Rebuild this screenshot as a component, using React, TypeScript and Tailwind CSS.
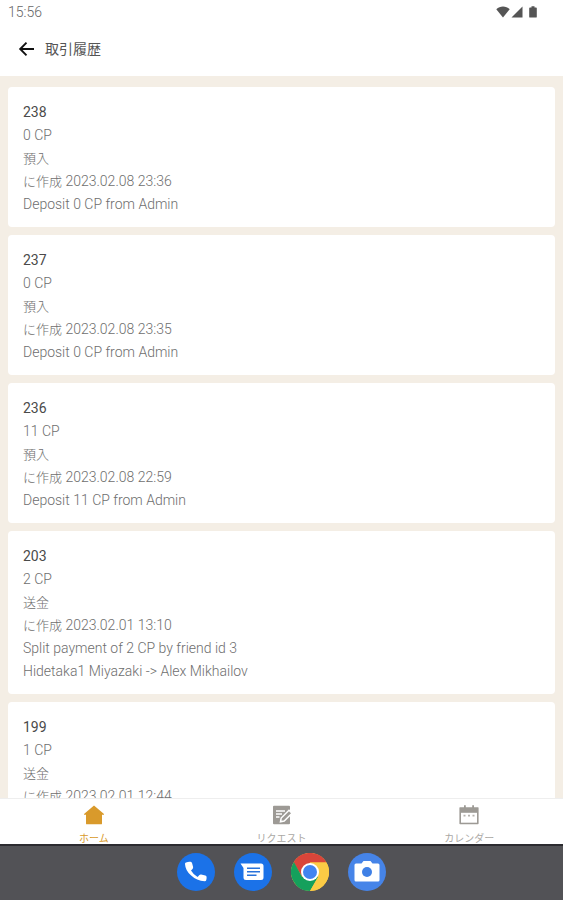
import type { ReactNode } from 'react';

type Transaction = {
  id: number;
  amount: string;
  kind: string;
  createdAt: string;
  notes: string[];
};

const transactions: Transaction[] = [
  { id: 238, amount: '0 CP', kind: '預入', createdAt: '2023.02.08 23:36', notes: ['Deposit 0 CP from Admin'] },
  { id: 237, amount: '0 CP', kind: '預入', createdAt: '2023.02.08 23:35', notes: ['Deposit 0 CP from Admin'] },
  { id: 236, amount: '11 CP', kind: '預入', createdAt: '2023.02.08 22:59', notes: ['Deposit 11 CP from Admin'] },
  {
    id: 203,
    amount: '2 CP',
    kind: '送金',
    createdAt: '2023.02.01 13:10',
    notes: ['Split payment of 2 CP by friend id 3', 'Hidetaka1 Miyazaki -> Alex Mikhailov'],
  },
  { id: 199, amount: '1 CP', kind: '送金', createdAt: '2023.02.01 12:44', notes: [] },
];

function StatusBar() {
  return (
    <div className="h-6 shrink-0 flex items-center justify-between pl-2 pr-6 text-sm font-light text-[#666666]">
      <span>15:56</span>
      <div className="flex items-center text-[#555555]">
        <svg viewBox="0 0 14 12" className="w-[14px] h-3 fill-current">
          <path d="M7 11.5 0.3 3.2C2.2 1.5 4.5.6 7 .6s4.800.9 6.700 2.600z" />
        </svg>
        <svg viewBox="0 0 12 12" className="w-3 h-3 ml-px fill-current">
          <path d="M11.500.5v11H.5z" />
        </svg>
        <svg viewBox="0 0 8 12" className="w-2 h-3 ml-[6px] mr-[2px] fill-current">
          <path d="M2.500.2h3v1.200H7q.8 0 .8.8v8.500q0 .9-.8.9H1q-.8 0-.8-.9V2.200q0-.8.8-.8h1.500z" />
        </svg>
      </div>
    </div>
  );
}

function Header() {
  return (
    <header className="h-[52px] shrink-0 flex items-center gap-[10px] pl-[18px] pb-[3px]">
      <button type="button" aria-label="Back">
        <svg viewBox="0 0 17 16" className="w-[17px] h-4" fill="none" stroke="#111111" strokeWidth="1.9">
          <path d="M16 8H2.500M8.500 1.700 2.200 8l6.300 6.300" />
        </svg>
      </button>
      <h1 className="text-sm text-[#555555]">取引履歴</h1>
    </header>
  );
}

function TransactionCard({ item }: { item: Transaction }) {
  return (
    <li className="rounded bg-white px-[15px] pt-[14px] pb-[11px] text-sm leading-[23px] font-light text-[#6e6e6e]">
      <h2 className="font-normal text-[#4a4a4a]">{item.id}</h2>
      <p>{item.amount}</p>
      <p className="text-[13px] leading-[23px]">{item.kind}</p>
      <p>
        <span className="text-[13px]">に作成</span> {item.createdAt}
      </p>
      {item.notes.map(note => (
        <p key={note}>{note}</p>
      ))}
    </li>
  );
}

function HomeIcon() {
  return (
    <svg viewBox="0 0 20 20" className="w-5 h-5 fill-current">
      <path d="M10 .5 20 8.900q.4.9-.6.900H18v8.600q0 .9-.9.900H2.900q-.9 0-.9-.9V9.800H.6q-1 0-.6-.9z" />
    </svg>
  );
}

function RequestIcon() {
  return (
    <svg viewBox="0 0 20 20" className="w-5 h-5">
      <path d="M3 .8h15q1 0 1 1v16.500q0 1-1 1H3q-1 0-1-1V1.800q0-1 1-1z" fill="#9d9a95" />
      <path d="M5 6h9M5 9h6M5 12h3.500" stroke="#ffffff" strokeWidth="1.500" />
      <path d="m9.500 16.700.7-3.700 7.800-7.800 3 3-7.800 7.800z" fill="#9d9a95" stroke="#ffffff" strokeWidth="1.500" />
    </svg>
  );
}

function CalendarIcon() {
  return (
    <svg viewBox="0 0 20 20" className="w-5 h-5">
      <path d="M1 2.200h18q.6 0 .6.600v15.800q0 .7-.7.700H1.100q-.7 0-.7-.7V2.800q0-.6.6-.6z" fill="#9d9a95" />
      <path d="M5 .3h1.800v3H5zM13.200.3H15v3h-1.800z" fill="#9d9a95" />
      <path d="M2 7.800h16v9.900H2z" fill="#ffffff" />
      <path d="M4.500 9.800h2v1.600h-2zM9 9.800h2v1.600H9zM13.500 9.800h2v1.600h-2z" fill="#b5b2ae" />
    </svg>
  );
}

function Tab({ label, active, children }: { label: string; active?: boolean; children: ReactNode }) {
  return (
    <a
      href="#"
      aria-current={active ? 'page' : undefined}
      className={
        active
          ? 'flex flex-col items-center pt-[6px] gap-2 text-[10px] leading-3 text-[#d99a2b]'
          : 'flex flex-col items-center pt-[6px] gap-2 text-[10px] leading-3 text-[#aaa8a4]'
      }
    >
      {children}
      {label}
    </a>
  );
}

function Dock() {
  return (
    <div className="h-14 shrink-0 flex items-center justify-center gap-[19px] pb-[2px] bg-[#525256] border-t-2 border-[#2c2b30]">
      <button type="button" aria-label="Phone">
        <svg viewBox="0 0 38 38" className="w-[38px] h-[38px]">
          <circle cx="19" cy="19" r="19" fill="#1b72e8" />
          <path
            d="M9 9.500q2.800-1.200 4.600-.7 1.200.3 1.500 1.500l1 3.800q.2 1-.6 1.800l-1.500 1.600q2.400 4.200 6.600 6.400l1.800-1.800q.7-.7 1.700-.5l4.200.9q1.200.3 1.300 1.500.1 1.800-.4 3.300-.3 1-1.400 1-8.200-.5-13.900-6.100Q8.400 17.700 8 11q-.1-1.100 1-1.500z"
            fill="#ffffff"
          />
        </svg>
      </button>
      <button type="button" aria-label="Messages">
        <svg viewBox="0 0 38 38" className="w-[38px] h-[38px]">
          <circle cx="19" cy="19" r="19" fill="#1b72e8" />
          <path d="M6.500 10.500h20.500q2.500 0 2.500 2.500v11.500q0 2.500-2.500 2.500H12q-2.500 0-2.500-2.500V15z" fill="#ffffff" />
          <path d="M13 15.200h13M13 18.700h13M13 22.200h9.500" stroke="#2872da" strokeWidth="1.600" />
        </svg>
      </button>
      <button type="button" aria-label="Chrome">
        <svg viewBox="0 0 38 38" className="w-[38px] h-[38px]">
          <circle cx="19" cy="19" r="19" fill="#fccb45" />
          <path d="M2.500 9.500A19 19 0 0 1 35.500 9.500H19L11 23.500z" fill="#d9453a" />
          <path d="M2.900 9A19 19 0 0 0 19 38L27.200 23.700 11 23.700z" fill="#15a05c" />
          <path d="M19 9.500h16.500A19 19 0 0 1 19 38l8.200-14.300z" fill="#fccb45" />
          <circle cx="19" cy="19" r="9" fill="#ffffff" />
          <circle cx="19" cy="19" r="7" fill="#4284f0" />
        </svg>
      </button>
      <button type="button" aria-label="Camera">
        <svg viewBox="0 0 38 38" className="w-[38px] h-[38px]">
          <circle cx="19" cy="19" r="19" fill="#4684e8" />
          <path
            d="M8 10.500h5.500L15.500 8h7l2 2.500H30q1.500 0 1.500 1.500v15q0 1.500-1.500 1.500H8q-1.500 0-1.500-1.500V12q0-1.500 1.500-1.500z"
            fill="#ffffff"
          />
          <circle cx="19" cy="19" r="5" fill="#3f80e6" />
        </svg>
      </button>
    </div>
  );
}

export default function App() {
  return (
    <div className="h-screen flex flex-col bg-white font-[Roboto,'Noto_Sans_CJK_JP',sans-serif]">
      <StatusBar />
      <Header />
      <main className="flex-1 min-h-0 overflow-y-auto [scrollbar-width:none] bg-[#f4eee5] px-2 pt-[11px]">
        <ul className="flex flex-col gap-2">
          {transactions.map(item => (
            <TransactionCard key={item.id} item={item} />
          ))}
        </ul>
      </main>
      <nav className="h-[46px] shrink-0 grid grid-cols-3 bg-white border-t border-[#eeeeee]">
        <Tab label="ホーム" active>
          <HomeIcon />
        </Tab>
        <Tab label="リクエスト">
          <RequestIcon />
        </Tab>
        <Tab label="カレンダー">
          <CalendarIcon />
        </Tab>
      </nav>
      <Dock />
    </div>
  );
}
